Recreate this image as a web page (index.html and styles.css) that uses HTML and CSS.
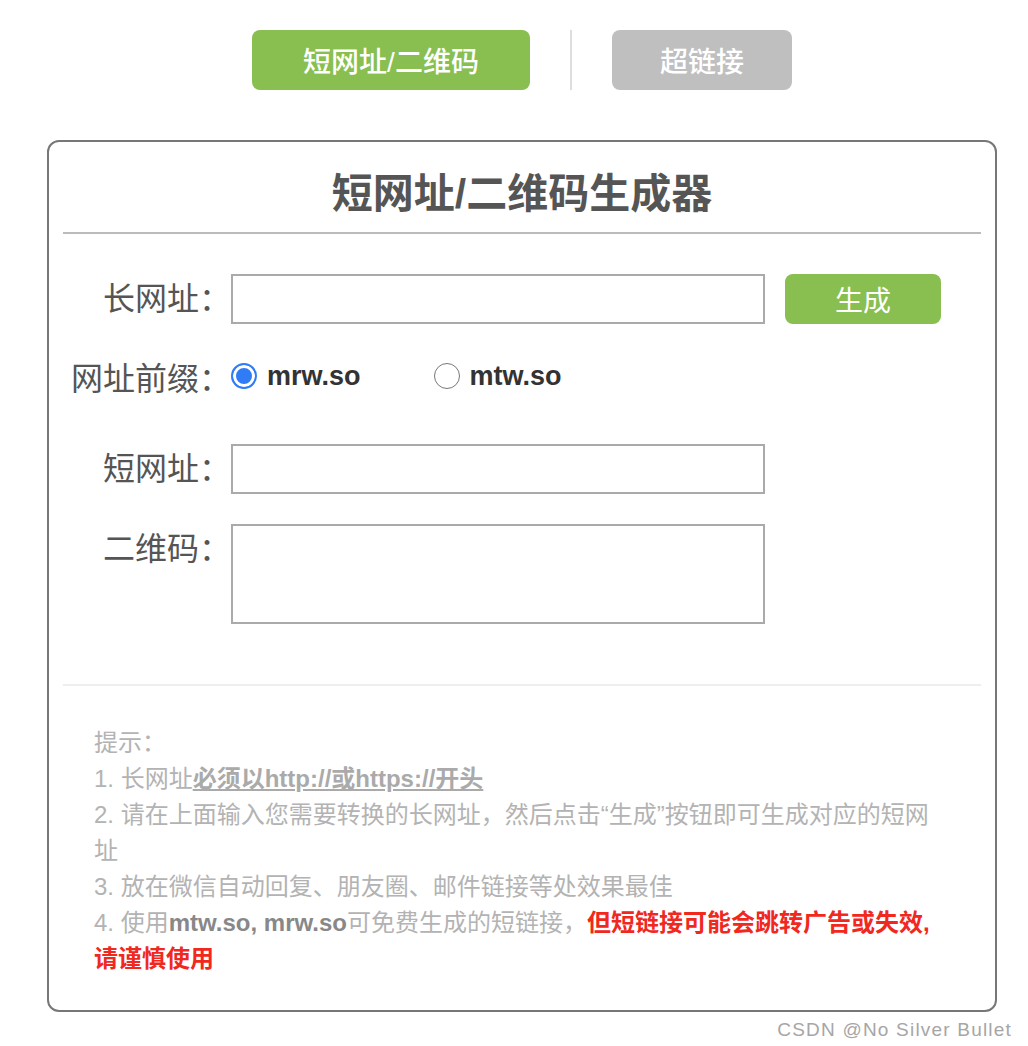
FILE: index.html
```html
<!DOCTYPE html>
<html lang="zh-CN">
<head>
<meta charset="utf-8">
<title>短网址/二维码生成器</title>
<link rel="stylesheet" href="styles.css">
</head>
<body>
<div class="page">
  <nav class="tabs">
    <a class="tab tab-active">短网址/二维码</a>
    <span class="tab-sep"></span>
    <a class="tab tab-off">超链接</a>
  </nav>
  <section class="card">
    <h1 class="card-title">短网址/二维码生成器</h1>
    <div class="form">
      <div class="row">
        <label class="lbl">长网址：</label>
        <input class="field" type="text">
        <button class="btn-gen" type="button">生成</button>
      </div>
      <div class="row row-radio">
        <span class="lbl">网址前缀：</span>
        <div class="radios">
          <span class="opt"><span class="dot dot-on"></span><span class="opt-text">mrw.so</span></span>
          <span class="opt"><span class="dot"></span><span class="opt-text">mtw.so</span></span>
        </div>
      </div>
      <div class="row row-short">
        <label class="lbl">短网址：</label>
        <input class="field" type="text">
      </div>
      <div class="row row-qr">
        <label class="lbl">二维码：</label>
        <div class="field field-qr"></div>
      </div>
    </div>
    <div class="sep"></div>
    <div class="tips">
      <p>提示：</p>
      <p>1. 长网址<b class="em-u">必须以http://或https://开头</b></p>
      <p>2. 请在上面输入您需要转换的长网址，然后点击“生成”按钮即可生成对应的短网址</p>
      <p>3. 放在微信自动回复、朋友圈、邮件链接等处效果最佳</p>
      <p>4. 使用<b class="em-d">mtw.so, mrw.so</b>可免费生成的短链接，<b class="em-r">但短链接可能会跳转广告或失效,请谨慎使用</b></p>
    </div>
  </section>
</div>
<div class="mark">CSDN @No Silver Bullet</div>
</body>
</html>
```
FILE: styles.css
```css
* { box-sizing: border-box; }
html, body { margin: 0; padding: 0; background: #fff; }
body {
  font-family: "Liberation Sans", "Noto Sans CJK SC", sans-serif;
  color: #555;
}
.page {
  width: 950px;
  margin-left: 47px;
}
.tabs {
  display: flex;
  justify-content: center;
  align-items: stretch;
  padding-top: 30px;
  height: 90px;
  gap: 40px;
}
.tab {
  display: flex;
  align-items: center;
  justify-content: center;
  height: 60px;
  border-radius: 8px;
  color: #fff;
  font-size: 28px;
  font-weight: 500;
}
.tab-active { width: 278px; background: #88bf50; }
.tab-off { width: 180px; background: #bfbfbf; }
.tab-sep { width: 2px; background: #dedede; }

.card {
  margin-top: 50px;
  border: 2px solid #777;
  border-radius: 12px;
}
.card-title {
  margin: 0 14px;
  padding: 24px 0 10px;
  line-height: 56px;
  font-size: 41px;
  font-weight: 700;
  text-align: center;
  color: #555;
  border-bottom: 2px solid #bbb;
}
.form { padding-top: 40px; }
.row { display: flex; align-items: flex-start; }
.row + .row { margin-top: 30px; }
.row-short { margin-top: 40px !important; }
.lbl {
  flex: 0 0 182px;
  text-align: right;
  font-size: 32px;
  line-height: 50px;
  color: #555;
  white-space: nowrap;
}
.field {
  width: 534px;
  height: 50px;
  border: 2px solid #aaa;
  border-radius: 0;
  background: #fff;
  margin: 0;
  padding: 0 8px;
  font-size: 24px;
  outline: none;
}
.field-qr { height: 100px; }
.btn-gen {
  margin-left: 20px;
  width: 156px;
  height: 50px;
  border: 0;
  border-radius: 8px;
  background: #88bf50;
  color: #fff;
  font-family: inherit;
  font-size: 28px;
  padding: 0;
}
.row-radio { height: 50px; align-items: center; }
.radios { display: flex; align-items: center; margin-top: -6px; }
.opt { display: flex; align-items: center; margin-right: 73px; }
.dot {
  width: 26px;
  height: 26px;
  border-radius: 50%;
  border: 1.5px solid #777;
  background: #fff;
  margin-right: 10px;
}
.dot-on {
  border: 2px solid #2f7cf6;
  background: #2f7cf6;
  box-shadow: inset 0 0 0 3px #fff;
}
.opt-text {
  font-size: 27px;
  font-weight: 700;
  color: #333;
}
.sep {
  margin: 60px 14px 0;
  height: 2px;
  background: #eee;
}
.tips {
  padding: 39px 50px 33px 45px;
  font-size: 24px;
  line-height: 36px;
  color: #b3b3b3;
}
.tips p { margin: 0; }
.em-u { color: #aaa; text-decoration: underline; }
.em-d { color: #888; }
.em-r { color: #f0281e; }
.mark {
  text-align: right;
  padding-right: 16px;
  margin-top: 7px;
  font-size: 19px;
  letter-spacing: 1.2px;
  line-height: 22px;
  color: #a6a6a6;
}
```
